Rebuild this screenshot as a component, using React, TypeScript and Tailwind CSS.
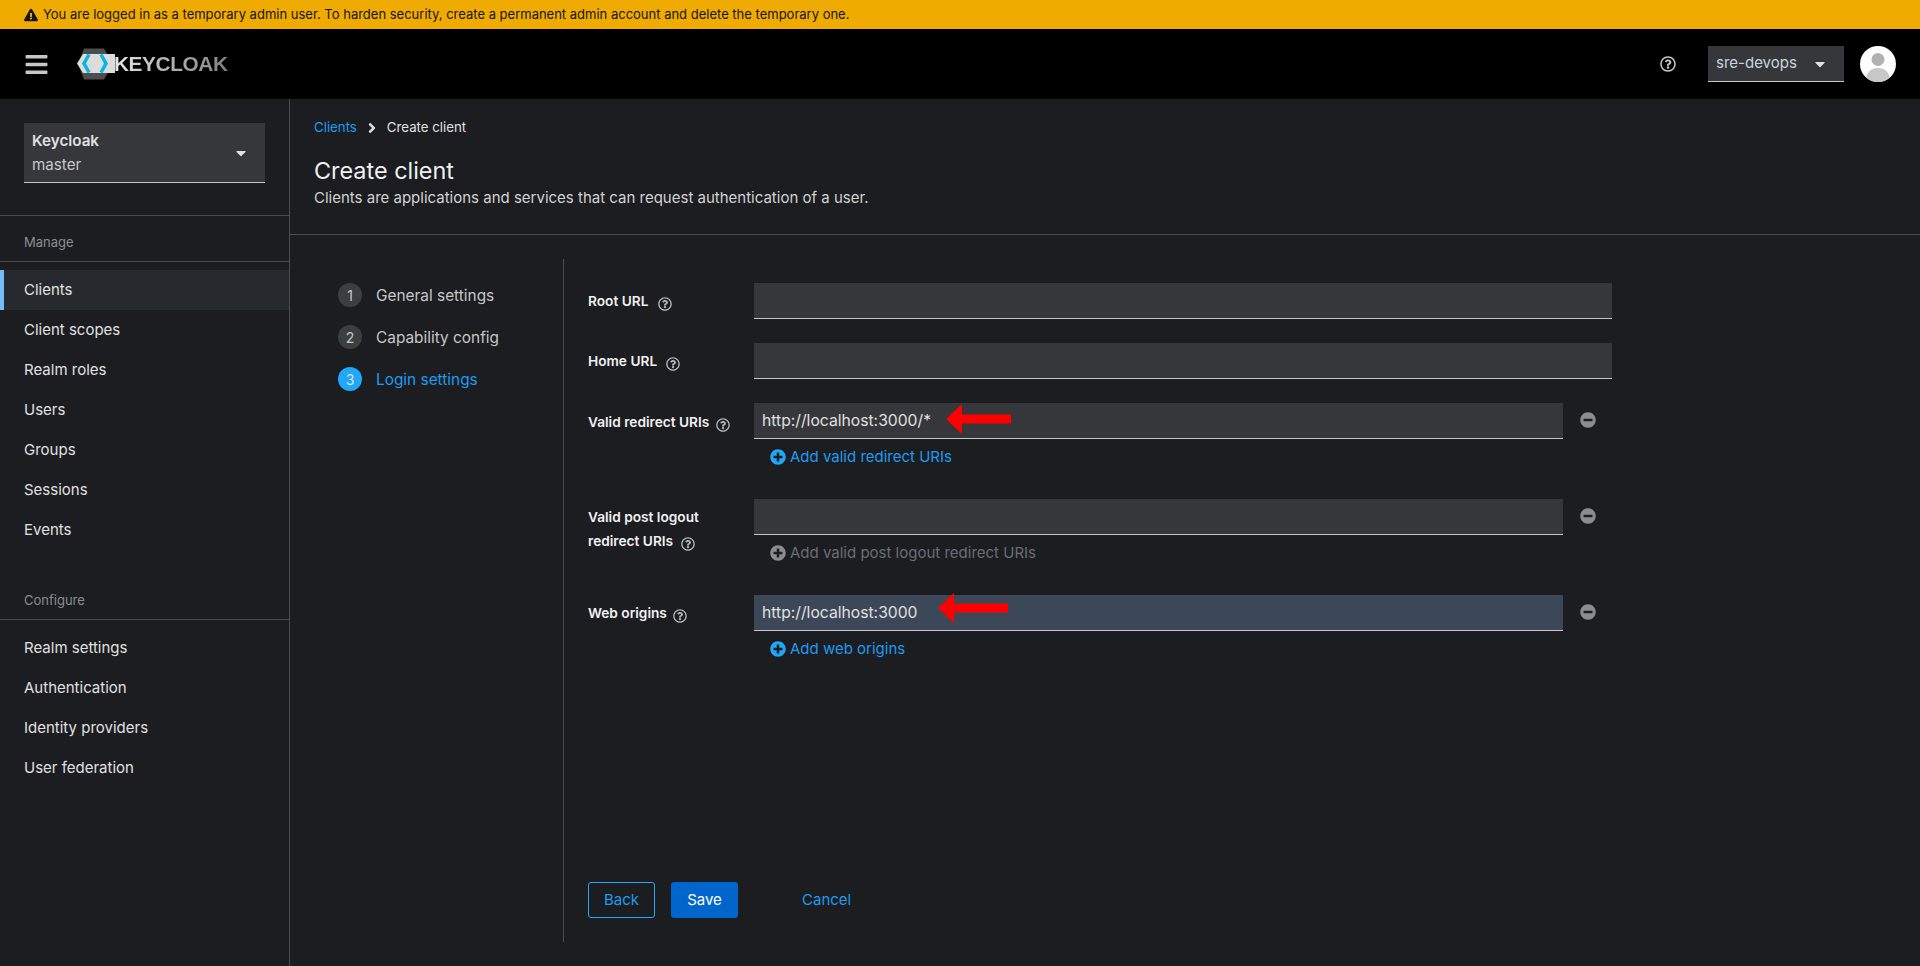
import React from "react";
import { FaRegQuestionCircle, FaPlusCircle, FaMinusCircle, FaBars, FaExclamationTriangle, FaCaretDown, FaAngleRight } from "react-icons/fa";

const Help = () => <FaRegQuestionCircle className="inline-block w-[14px] h-[14px] text-[#b8bbbe]" />;

function NavItem({ label, active }: { label: string; active?: boolean }) {
  return (
    <div className={active ? "h-10 flex items-center pl-5 border-l-4 border-[#73bcf7] bg-[#26292d] text-[#e0e0e0] text-[15px]" : "h-10 flex items-center pl-6 text-[#e0e0e0] text-[15px]"}>
      {label}
    </div>
  );
}

function Logo() {
  return (
    <div className="flex items-center ml-[28px]">
      <svg width="38" height="32" viewBox="0 0 38 32" className="shrink-0">
        <polygon points="7,0.5 27,0.5 36,16 27,31.5 7,31.5 1,16" fill="#4d4d4d" />
        <polygon points="0,15.5 6,6 38,6 38,25 6,25" fill="#dcdcdc" />
        <polyline points="12,6.5 7,15.5 12,24.5" fill="none" stroke="#00b8e3" strokeWidth="3.5" />
        <polyline points="24,6.5 29,15.5 24,24.5" fill="none" stroke="#00b8e3" strokeWidth="3.5" />
      </svg>
      <span className="font-['Liberation_Sans',sans-serif] font-bold text-[20.8px] leading-none -ml-[1px] tracking-[-0.4px] bg-gradient-to-r from-[#e6e6e6] to-[#808080] bg-clip-text text-transparent">KEYCLOAK</span>
    </div>
  );
}

function Avatar() {
  return (
    <svg width="36" height="36" viewBox="0 0 36 36" className="shrink-0">
      <defs>
        <clipPath id="av"><circle cx="18" cy="18" r="18" /></clipPath>
      </defs>
      <g clipPath="url(#av)">
        <rect width="36" height="36" fill="#fff" />
        <circle cx="18" cy="13.5" r="6.5" fill="#b0b0b0" />
        <path d="M6 36 C6 26 11 22 18 22 C25 22 30 26 30 36 Z" fill="#c8c8c8" />
      </g>
    </svg>
  );
}

function ArrowShort({ className }: { className: string }) {
  return (
    <svg width="65" height="30" viewBox="0 0 65 30" className={className}>
      <polygon points="0,15 16,0 16,10.5 65,10.5 65,19.5 16,19.5 16,30" fill="#ff0000" />
    </svg>
  );
}

function ArrowLong({ className }: { className: string }) {
  return (
    <svg width="70" height="30" viewBox="0 0 70 30" className={className}>
      <polygon points="0,15 16,0 16,10.5 70,10.5 70,19.5 16,19.5 16,30" fill="#ff0000" />
    </svg>
  );
}

function TextRow({ value, highlight }: { value?: string; highlight?: boolean }) {
  return (
    <div className={(highlight ? "bg-[#3c4758] " : "bg-[#36373a] ") + "h-9 flex-1 border-b border-[#c7c7c7] flex items-center px-2 text-[#e0e0e0] text-[15.7px]"}>
      {value}
    </div>
  );
}

function Label({ children }: { children: React.ReactNode }) {
  return <div className="w-[166px] shrink-0 text-[13.7px] font-semibold text-[#f0f0f0] leading-[24px]">{children}</div>;
}

function Minus() {
  return (
    <div className="w-[49px] flex justify-center shrink-0 mb-[2px]">
      <FaMinusCircle className="w-4 h-4 text-[#8a8d90]" />
    </div>
  );
}

function AddLink({ label, disabled }: { label: string; disabled?: boolean }) {
  return (
    <div className={(disabled ? "text-[#6a6e73] " : "text-[#1f9bee] ") + "flex items-center gap-1 h-6 mt-[6px] pl-4 text-[15px]"}>
      <FaPlusCircle className={(disabled ? "text-[#8a8d90] " : "text-[#1fa7f8] ") + "w-4 h-4"} />
      <span>{label}</span>
    </div>
  );
}

function Step({ n, label, active }: { n: number; label: string; active?: boolean }) {
  return (
    <div className="flex items-center h-6 gap-[14px] mb-[18px]">
      <div className={(active ? "bg-[#1fa7f8] text-[#e0e0e0] " : "bg-[#3c3f42] text-[#c7c7c7] ") + "w-6 h-6 rounded-full flex items-center justify-center text-[14px]"}>{n}</div>
      <span className={(active ? "text-[#1f9bee] " : "text-[#c7c7c7] ") + "text-[15.4px] pt-[2px]"}>{label}</span>
    </div>
  );
}

export default function App() {
  return (
    <div className="w-[1920px] h-[966px] overflow-hidden flex flex-col bg-[#1b1d21] font-['Inter',sans-serif] text-[#e0e0e0]">
      <div className="h-[29px] shrink-0 bg-[#f0ab00] flex items-center pl-6 gap-[5px] text-[#151515] text-[13px]">
        <FaExclamationTriangle className="w-[14px] h-[14px]" />
        <span>You are logged in as a temporary admin user. To harden security, create a permanent admin account and delete the temporary one.</span>
      </div>

      <header className="h-[70px] shrink-0 bg-black flex items-center pl-6 pr-6">
        <FaBars className="w-[25px] h-[25px] text-[#c7c7c7]" />
        <Logo />
        <div className="flex-1" />
        <FaRegQuestionCircle className="w-4 h-4 text-[#c7c7c7] mr-[32px]" />
        <div className="w-[136px] h-9 bg-[#36373a] border-b border-[#c7c7c7] flex items-center justify-between pl-2 pr-4 text-[15px] text-[#c9d4df] mr-4">
          <span>sre-devops</span>
          <FaCaretDown className="w-4 h-4 text-[#e0e0e0]" />
        </div>
        <Avatar />
      </header>

      <div className="flex-1 flex min-h-0">
        <aside className="w-[290px] shrink-0 border-r border-[#4a4c50] flex flex-col">
          <div className="pt-6 px-6 pb-8 border-b border-[#4a4c50] h-[117px]">
            <div className="h-[60px] bg-[#36373a] border-b border-[#c7c7c7] flex items-center justify-between pl-2 pr-4">
              <div className="flex flex-col">
                <span className="text-[15.2px] font-semibold leading-6 text-[#e0e0e0]">Keycloak</span>
                <span className="text-[15.2px] leading-6 text-[#c7c7c7]">master</span>
              </div>
              <FaCaretDown className="w-4 h-4 text-[#e0e0e0]" />
            </div>
          </div>
          <div className="h-[46px] flex items-center pl-6 pt-[9px] text-[13px] text-[#8a8d90] border-b border-[#4a4c50] mb-2">Manage</div>
          <NavItem label="Clients" active />
          <NavItem label="Client scopes" />
          <NavItem label="Realm roles" />
          <NavItem label="Users" />
          <NavItem label="Groups" />
          <NavItem label="Sessions" />
          <NavItem label="Events" />
          <div className="h-[43px] flex items-center pl-6 pt-[6px] mt-[27px] text-[13px] text-[#8a8d90] border-b border-[#4a4c50] mb-2">Configure</div>
          <NavItem label="Realm settings" />
          <NavItem label="Authentication" />
          <NavItem label="Identity providers" />
          <NavItem label="User federation" />
        </aside>

        <main className="flex-1 flex flex-col min-w-0">
          <div className="h-[136px] shrink-0 border-b border-[#4a4c50] pl-[24px] pt-4">
            <div className="flex items-center h-6 text-[13.25px] pt-[1px]">
              <span className="text-[#1f9bee]">Clients</span>
              <FaAngleRight className="w-4 h-4 mx-[7px] text-[#e0e0e0]" />
              <span className="text-[#e0e0e0]">Create client</span>
            </div>
            <h1 className="text-[23.4px] leading-[30px] mt-[17px] text-[#f0f0f0]">Create client</h1>
            <p className="text-[15px] leading-6 text-[#d2d2d2]">Clients are applications and services that can request authentication of a user.</p>
          </div>

          <div className="flex-1 flex pt-6 pl-[48px] pb-6 min-h-0">
            <div className="w-[226px] shrink-0 pt-6 border-r border-[#4a4c50] mr-0">
              <Step n={1} label="General settings" />
              <Step n={2} label="Capability config" />
              <Step n={3} label="Login settings" active />
            </div>

            <div className="flex-1 flex flex-col pl-6 pt-6 pb-0 relative">
              <div className="w-[1024px]">
                <div className="flex h-9 mb-6 items-center">
                  <div className="pt-[2px]"><Label>Root URL <span className="ml-[6px] align-[-2px]"><Help /></span></Label></div>
                  <TextRow />
                </div>
                <div className="flex h-9 mb-6 items-center">
                  <div className="pt-[2px]"><Label>Home URL <span className="ml-[5px] align-[-2px]"><Help /></span></Label></div>
                  <TextRow />
                </div>
                <div className="flex mb-[30px]">
                  <div className="pt-[7px]"><Label>Valid redirect URIs <span className="ml-[3px] align-[-2px]"><Help /></span></Label></div>
                  <div className="flex-1">
                    <div className="flex items-center"><TextRow value="http://localhost:3000/*" /><Minus /></div>
                    <AddLink label="Add valid redirect URIs" />
                  </div>
                </div>
                <div className="flex mb-[30px]">
                  <div className="pt-[6px]"><Label>Valid post logout<br />redirect URIs <span className="ml-[4px] align-[-2px]"><Help /></span></Label></div>
                  <div className="flex-1">
                    <div className="flex items-center"><TextRow /><Minus /></div>
                    <AddLink label="Add valid post logout redirect URIs" disabled />
                  </div>
                </div>
                <div className="flex">
                  <div className="pt-[6px]"><Label>Web origins <span className="ml-[3px] align-[-2px]"><Help /></span></Label></div>
                  <div className="flex-1">
                    <div className="flex items-center"><TextRow value="http://localhost:3000" highlight /><Minus /></div>
                    <AddLink label="Add web origins" />
                  </div>
                </div>
              </div>

              <ArrowShort className="absolute left-[382px] top-[145px]" />
              <ArrowLong className="absolute left-[374px] top-[334px]" />

              <div className="mt-auto flex items-center h-9 mb-6 text-[15px]">
                <div className="w-[67px] h-9 border border-[#1fa7f8] rounded-[3px] flex items-center justify-center text-[#1f9bee]">Back</div>
                <div className="w-[67px] h-9 ml-4 bg-[#0066cc] rounded-[3px] flex items-center justify-center text-white">Save</div>
                <div className="ml-16 text-[#1f9bee]">Cancel</div>
              </div>
            </div>
          </div>
        </main>
      </div>
    </div>
  );
}
